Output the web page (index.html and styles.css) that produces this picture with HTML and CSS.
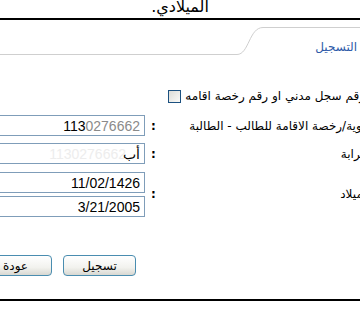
FILE: index.html
```html
<!DOCTYPE html>
<html lang="ar" dir="rtl">
<head>
    <meta charset="UTF-8">
    <meta name="viewport" content="width=device-width, initial-scale=1.0">
    <title>التسجيل</title>
    <link rel="stylesheet" href="styles.css">
</head>
<body>
    <div class="heading">الميلادي.</div>
    <div class="rule"></div>

    <div class="tabs">
        <div class="tab">التسجيل</div>
        <svg class="tab-curve" width="30" height="28" viewBox="0 0 30 28">
            <path d="M0 27.5 C 12 27.5, 12 0.5, 26 0.5 L 30 0.5" fill="none" stroke="#cfcfcf" stroke-width="1"/>
        </svg>
        <div class="tab-fill"></div>
    </div>

    <div class="check-row">
        <label>رقم سجل مدني او رقم رخصة اقامه</label>
        <span class="checkbox"></span>
    </div>

    <div class="form">
        <div class="label">رقم الهوية/رخصة الاقامة للطالب - الطالبة</div>
        <div class="colon">:</div>
        <div class="field"><span class="dark">113</span><span class="faded">0276662</span></div>

        <div class="label">صلة القرابة</div>
        <div class="colon">:</div>
        <div class="field">أب<span class="ghost">1130276662</span></div>

        <div class="label">تاريخ الميلاد</div>
        <div class="colon">:</div>
        <div class="field-stack">
            <div class="field">11/02/1426</div>
            <div class="field">3/21/2005</div>
        </div>
    </div>

    <div class="actions">
        <button class="btn">تسجيل</button>
        <button class="btn">عودة</button>
    </div>

    <div class="rule bottom"></div>
</body>
</html>
```

FILE: styles.css
```css
html, body {
    margin: 0;
    padding: 0;
    background-color: #ffffff;
}

body {
    width: 360px;
    height: 314px;
    overflow: hidden;
    direction: rtl;
    font-family: "DejaVu Sans", Tahoma, sans-serif;
    font-size: 12px;
    color: #000;
}

.heading {
    height: 21px;
    margin-top: -3px;
    font-size: 16px;
    line-height: 20px;
    text-align: center;
}

.rule {
    border-top: 2px solid #000;
}

.tabs {
    display: flex;
    height: 28px;
    margin-top: 7px;
}

.tab {
    width: 90px;
    border-top: 1px solid #cfcfcf;
    padding: 12px 3px 0 0;
    color: #2d5aa8;
    font-size: 12px;
}

.tab-curve {
    flex: none;
}

.tab-fill {
    flex: 1;
    border-bottom: 1px solid #cfcfcf;
}

.check-row {
    display: flex;
    align-items: center;
    gap: 4px;
    margin: 33px -5px 0 0;
    height: 16px;
}

.checkbox {
    width: 11px;
    height: 11px;
    border: 1px solid #1c5180;
    background: linear-gradient(135deg, #dcdcd7, #fafaf8);
}

.form {
    display: grid;
    grid-template-columns: 210px 43px 200px;
    row-gap: 7px;
    align-items: center;
    margin: 11px -38px 0 0;
}

.label {
    white-space: nowrap;
}

.colon {
    text-align: left;
    padding-left: 6px;
    font-weight: bold;
}

.field {
    position: relative;
    height: 21px;
    box-sizing: border-box;
    border: 1px solid #7f9db9;
    padding: 1px 4px 0;
    font-family: "Liberation Sans", Arial, sans-serif;
    font-size: 14px;
    line-height: 19px;
    text-align: right;
    direction: ltr;
}

.field .faded {
    color: #8a8a8a;
}

.field .ghost {
    position: absolute;
    right: 18px;
    color: #ededed;
}

.field-stack {
    display: flex;
    flex-direction: column;
    gap: 3px;
    padding-top: 1px;
}

.actions {
    display: flex;
    gap: 11px;
    margin: 38px 224px 0 0;
}

.btn {
    flex: none;
    width: 73px;
    height: 21px;
    border: 1px solid #4a8db0;
    border-radius: 4px;
    background: linear-gradient(#ffffff, #f2f2ee 60%, #d8d8d2);
    font-family: "DejaVu Sans", Tahoma, sans-serif;
    font-size: 12px;
    color: #000;
    padding: 0;
}

.rule.bottom {
    margin-top: 23px;
}
```
